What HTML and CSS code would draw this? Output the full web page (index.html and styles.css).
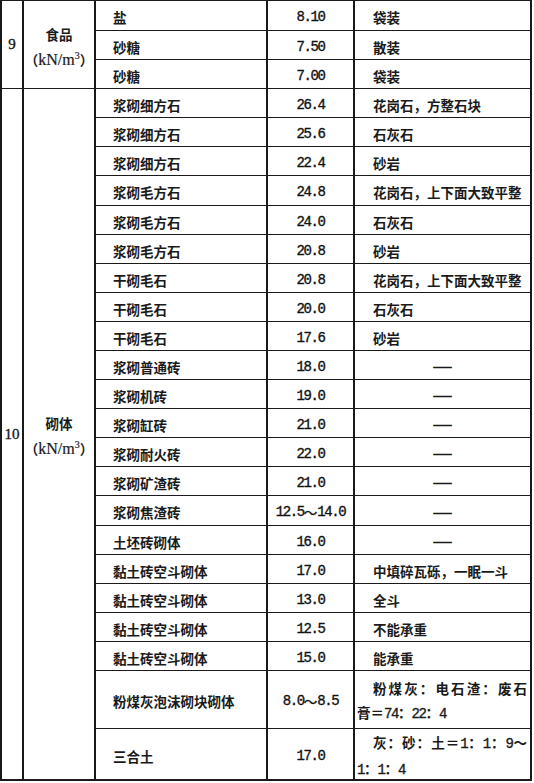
FILE: index.html
```html
<!DOCTYPE html>
<html lang="zh-CN">
<head>
<meta charset="utf-8">
<title>材料自重表</title>
<link rel="stylesheet" href="styles.css">
</head>
<body>
<div class="tbl">
  <div class="c no g9">9</div>
  <div class="c cat g9"><span>食品</span><span>（<span class="lat">kN/m<sup>3</sup></span>）</span></div>
  <div class="c no g10">10</div>
  <div class="c cat g10"><span>砌体</span><span>（<span class="lat">kN/m<sup>3</sup></span>）</span></div>

  <div class="c name">盐</div><div class="c val">8.10</div><div class="c note">袋装</div>
  <div class="c name">砂糖</div><div class="c val">7.50</div><div class="c note">散装</div>
  <div class="c name">砂糖</div><div class="c val">7.00</div><div class="c note">袋装</div>

  <div class="c name">浆砌细方石</div><div class="c val">26.4</div><div class="c note">花岗石，方整石块</div>
  <div class="c name">浆砌细方石</div><div class="c val">25.6</div><div class="c note">石灰石</div>
  <div class="c name">浆砌细方石</div><div class="c val">22.4</div><div class="c note">砂岩</div>
  <div class="c name">浆砌毛方石</div><div class="c val">24.8</div><div class="c note">花岗石，上下面大致平整</div>
  <div class="c name">浆砌毛方石</div><div class="c val">24.0</div><div class="c note">石灰石</div>
  <div class="c name">浆砌毛方石</div><div class="c val">20.8</div><div class="c note">砂岩</div>
  <div class="c name">干砌毛石</div><div class="c val">20.8</div><div class="c note">花岗石，上下面大致平整</div>
  <div class="c name">干砌毛石</div><div class="c val">20.0</div><div class="c note">石灰石</div>
  <div class="c name">干砌毛石</div><div class="c val">17.6</div><div class="c note">砂岩</div>
  <div class="c name">浆砌普通砖</div><div class="c val">18.0</div><div class="c note dash">—</div>
  <div class="c name">浆砌机砖</div><div class="c val">19.0</div><div class="c note dash">—</div>
  <div class="c name">浆砌缸砖</div><div class="c val">21.0</div><div class="c note dash">—</div>
  <div class="c name">浆砌耐火砖</div><div class="c val">22.0</div><div class="c note dash">—</div>
  <div class="c name">浆砌矿渣砖</div><div class="c val">21.0</div><div class="c note dash">—</div>
  <div class="c name">浆砌焦渣砖</div><div class="c val">12.5<span class="cjk">～</span>14.0</div><div class="c note dash">—</div>
  <div class="c name">土坯砖砌体</div><div class="c val">16.0</div><div class="c note dash">—</div>
  <div class="c name">黏土砖空斗砌体</div><div class="c val">17.0</div><div class="c note">中填碎瓦砾，一眠一斗</div>
  <div class="c name">黏土砖空斗砌体</div><div class="c val">13.0</div><div class="c note">全斗</div>
  <div class="c name">黏土砖空斗砌体</div><div class="c val">12.5</div><div class="c note">不能承重</div>
  <div class="c name">黏土砖空斗砌体</div><div class="c val">15.0</div><div class="c note">能承重</div>
  <div class="c name">粉煤灰泡沫砌块砌体</div><div class="c val">8.0<span class="cjk">～</span>8.5</div>
  <div class="c note multi"><div class="l1">粉煤灰：电石渣：废石</div><div class="l2">膏＝<span class="num">74</span>：<span class="num">22</span>：<span class="num">4</span></div></div>
  <div class="c name">三合土</div><div class="c val">17.0</div>
  <div class="c note multi"><div class="l1">灰：砂：土＝<span class="num">1</span>：<span class="num">1</span>：<span class="num">9</span>～</div><div class="l2"><span class="num">1</span>：<span class="num">1</span>：<span class="num">4</span></div></div>
</div>
</body>
</html>
```

FILE: styles.css
```css
html, body {
  margin: 0;
  padding: 0;
  background: #ffffff;
}

.tbl {
  display: grid;
  grid-template-columns: 20px 70px 170px 85px 175px;
  grid-template-rows: 29px repeat(5, 28px) 29px repeat(10, 28px) 29px repeat(5, 28px) 57px 50px;
  column-gap: 2px;
  row-gap: 1px;
  padding: 1px 2px 2px 2px;
  width: max-content;
  background: #1a1a1a;
  font-family: "Noto Sans CJK SC", sans-serif;
  font-size: 13.5px;
  font-weight: 700;
  color: #1a1a1a;
}

.c {
  background: #ffffff;
  display: flex;
  align-items: center;
  box-sizing: border-box;
  padding-top: 3px;
  white-space: nowrap;
}

.g9 { grid-row: 1 / 4; }
.g10 { grid-row: 4 / 26; }

.no {
  grid-column: 1;
  justify-content: center;
  padding-top: 0;
  font-family: "Liberation Serif", serif;
  font-size: 15px;
  font-weight: 400;
  color: #111111;
  -webkit-text-stroke: 0.3px #111111;
}

.cat {
  grid-column: 2;
  flex-direction: column;
  justify-content: center;
  line-height: 25px;
  padding-top: 4px;
}

.lat {
  font-family: "Liberation Serif", serif;
  font-size: 16px;
  font-weight: 400;
  -webkit-text-stroke: 0.2px #1a1a1a;
}

.lat sup {
  font-size: 10px;
  vertical-align: 6px;
  line-height: 0;
}

.name {
  grid-column: 3;
  padding-left: 17px;
}

.val {
  grid-column: 4;
  justify-content: center;
  font-family: "Liberation Mono", monospace;
  font-size: 14px;
  font-weight: 400;
  letter-spacing: -1.4px;
  color: #111111;
  -webkit-text-stroke: 0.35px #111111;
}

.cjk {
  font-family: "Noto Sans CJK SC", sans-serif;
  letter-spacing: 0;
  font-size: 13.5px;
  font-weight: 400;
}

.note {
  grid-column: 5;
  padding-left: 18px;
}

.note.dash {
  justify-content: center;
  padding-left: 0;
  font-family: "Liberation Serif", serif;
  font-size: 18px;
  font-weight: 400;
  -webkit-text-stroke: 0.4px #1a1a1a;
}

.note.multi {
  flex-direction: column;
  justify-content: center;
  align-items: stretch;
  padding: 3px 3px 0 2px;
  line-height: 24px;
}

.l1 {
  text-indent: 16px;
  text-align: justify;
  text-align-last: justify;
}

.l2 {
  text-align: left;
}

.num {
  font-family: "Liberation Mono", monospace;
  font-size: 14px;
  font-weight: 400;
  letter-spacing: -1.4px;
  -webkit-text-stroke: 0.35px #1a1a1a;
}
```
